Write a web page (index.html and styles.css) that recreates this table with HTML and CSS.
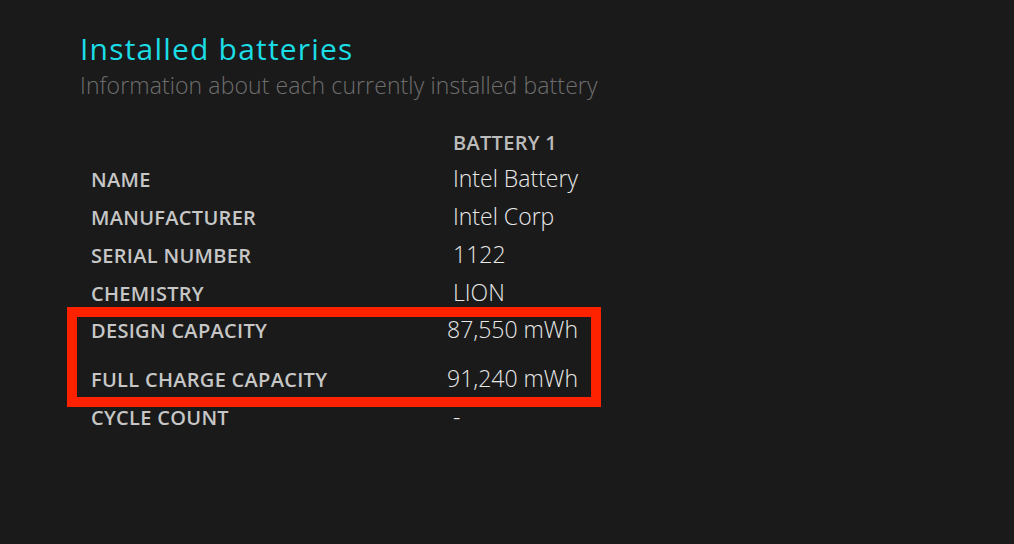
FILE: index.html
```html
<!DOCTYPE html>
<html>
<head>
<meta charset="utf-8">
<link rel="stylesheet" href="styles.css">
</head>
<body>
<div class="page">
  <h1 class="title">Installed batteries</h1>
  <p class="subtitle">Information about each currently installed battery</p>
  <div class="table">
    <div class="row head"><span class="label"></span><span class="colhead">BATTERY 1</span></div>
    <div class="row"><span class="label">NAME</span><span class="value">Intel Battery</span></div>
    <div class="row"><span class="label">MANUFACTURER</span><span class="value">Intel Corp</span></div>
    <div class="row"><span class="label">SERIAL NUMBER</span><span class="value">1122</span></div>
    <div class="row"><span class="label">CHEMISTRY</span><span class="value">LION</span></div>
    <div class="highlight">
      <div class="hrow"><span class="label">DESIGN CAPACITY</span><span class="value">87,550 mWh</span></div>
      <div class="hrow"><span class="label">FULL CHARGE CAPACITY</span><span class="value">91,240 mWh</span></div>
    </div>
    <div class="row"><span class="label">CYCLE COUNT</span><span class="value">-</span></div>
  </div>
</div>
</body>
</html>
```
FILE: styles.css
```css
html, body {
  margin: 0;
  padding: 0;
  background: #1a1a1a;
  height: 100%;
}
body {
  font-family: "Open Sans", "Noto Sans", sans-serif;
  overflow: hidden;
}
.page {
  padding: 30px 0 0 80px;
}
.title {
  margin: 0;
  font-size: 30px;
  font-weight: 400;
  color: #1adde6;
  line-height: 38px;
  letter-spacing: 1.2px;
}
.subtitle {
  margin: 1px 0 0;
  font-size: 23px;
  font-weight: 300;
  color: #6e6e6e;
  line-height: 32px;
  letter-spacing: 0.1px;
}
.table {
  margin-top: 23px;
  margin-left: 11px;
  display: flex;
  flex-direction: column;
  width: 510px;
}
.row {
  display: grid;
  grid-template-columns: 362px 1fr;
  height: 38px;
  align-items: center;
}
.row.head {
  height: 37px;
}
.label {
  font-size: 20px;
  line-height: 26px;
  font-weight: 600;
  color: #c6c6c6;
  letter-spacing: 0.3px;
}
.colhead {
  font-size: 20px;
  line-height: 26px;
  font-weight: 600;
  color: #bcbcbc;
  letter-spacing: 0.3px;
}
.value {
  font-size: 23px;
  line-height: 26px;
  font-weight: 300;
  color: #e8e8e8;
  margin-bottom: 4px;
}
.highlight {
  box-sizing: border-box;
  margin: -6px 0 -8px -24px;
  padding: 1px 0 4px 14px;
  border: 10px solid #ff2200;
  width: 534px;
  display: flex;
  flex-direction: column;
  gap: 23px;
}
.hrow {
  display: grid;
  grid-template-columns: 356px 1fr;
  height: 26px;
  align-items: start;
}
.hrow .value {
  margin: -2px 0 0;
}
```
